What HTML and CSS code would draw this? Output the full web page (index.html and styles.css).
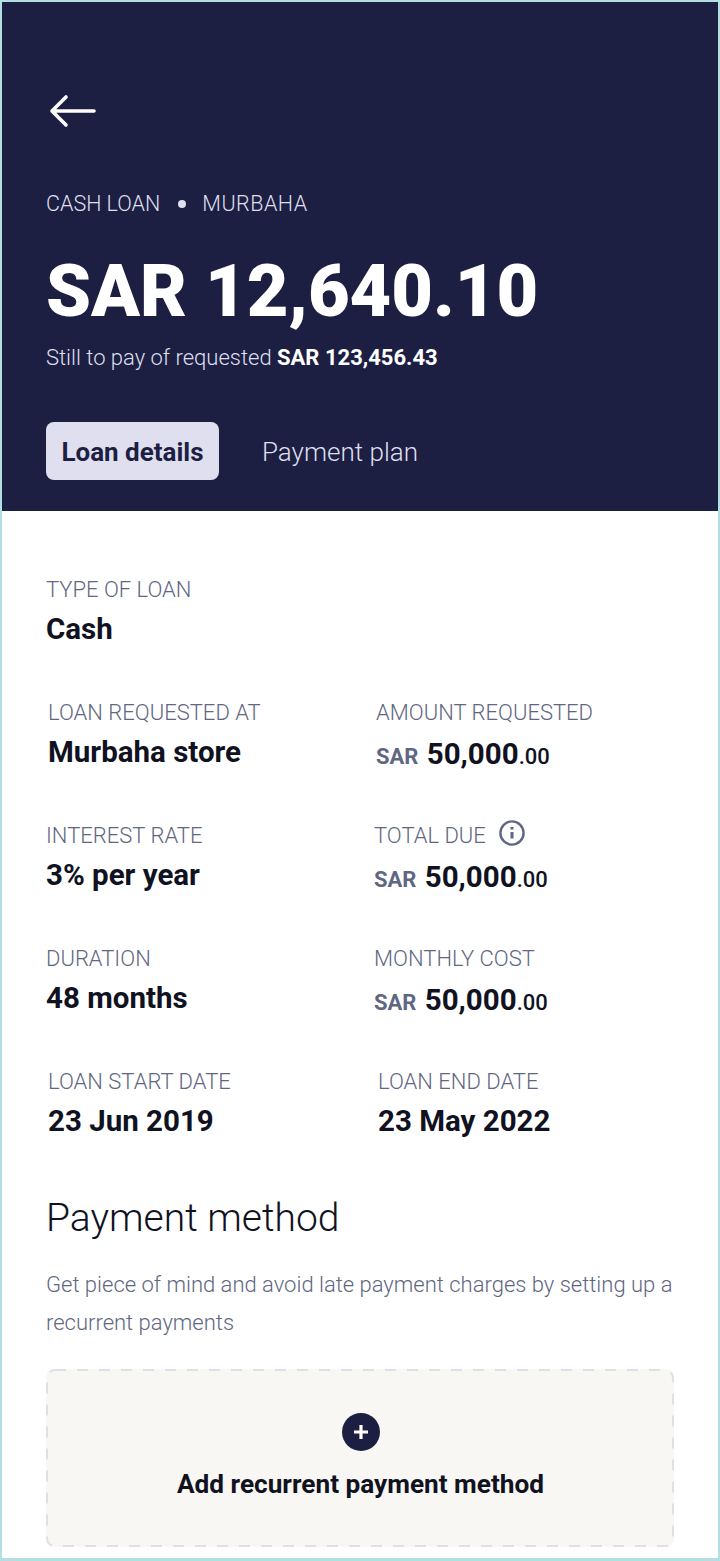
FILE: index.html
```html
<!DOCTYPE html>
<html lang="en">
<head>
    <meta charset="UTF-8">
    <meta name="viewport" content="width=device-width, initial-scale=1.0">
    <title>Loan details</title>
    <link rel="stylesheet" href="styles.css">
</head>

<body>
    <header class="hero">
        <svg class="back" width="48" height="34" viewBox="0 0 48 34" fill="none" stroke="#fff" stroke-width="3.600" stroke-linecap="round" stroke-linejoin="round">
            <path d="M46 17H4M18 3 4 17l14 14"/>
        </svg>
        <div class="crumbs"><span>CASH LOAN</span><i class="dot"></i><span>MURBAHA</span></div>
        <h1 class="balance">SAR 12,640.10</h1>
        <p class="still">Still to pay of requested <b>SAR 123,456.43</b></p>
        <nav class="tabs">
            <a class="tab active">Loan details</a>
            <a class="tab">Payment plan</a>
        </nav>
    </header>

    <main class="content">
        <div class="row row-a">
            <div class="item">
                <div class="label">TYPE OF LOAN</div>
                <div class="value">Cash</div>
            </div>
        </div>
        <div class="row row-b">
            <div class="item">
                <div class="label">LOAN REQUESTED AT</div>
                <div class="value">Murbaha store</div>
            </div>
            <div class="item">
                <div class="label">AMOUNT REQUESTED</div>
                <div class="value money"><span class="cur">SAR</span> 50,000<span class="dec">.00</span></div>
            </div>
        </div>
        <div class="row row-a">
            <div class="item">
                <div class="label">INTEREST RATE</div>
                <div class="value">3% per year</div>
            </div>
            <div class="item">
                <div class="label">TOTAL DUE
                    <svg class="info" width="28" height="28" viewBox="0 0 28 28" fill="none" stroke="#5f6782" stroke-width="2.400">
                        <circle cx="14" cy="14" r="11.600"/>
                        <path d="M14 13v6.500" stroke-width="3"/>
                        <path d="M14 8v2.500" stroke-width="3"/>
                    </svg>
                </div>
                <div class="value money"><span class="cur">SAR</span> 50,000<span class="dec">.00</span></div>
            </div>
        </div>
        <div class="row row-a">
            <div class="item">
                <div class="label">DURATION</div>
                <div class="value">48 months</div>
            </div>
            <div class="item">
                <div class="label">MONTHLY COST</div>
                <div class="value money"><span class="cur">SAR</span> 50,000<span class="dec">.00</span></div>
            </div>
        </div>
        <div class="row row-c">
            <div class="item">
                <div class="label">LOAN START DATE</div>
                <div class="value">23 Jun 2019</div>
            </div>
            <div class="item">
                <div class="label">LOAN END DATE</div>
                <div class="value">23 May 2022</div>
            </div>
        </div>

        <h2 class="section-title">Payment method</h2>
        <p class="section-text">Get piece of mind and avoid late payment charges by setting up a recurrent payments</p>

        <div class="add-box">
            <svg class="dashes" width="100%" height="100%" fill="none">
                <rect x="1" y="1" width="626" height="176" rx="8" stroke="#dfdfea" stroke-width="2" stroke-dasharray="11 11"/>
            </svg>
            <span class="plus">
                <svg width="16" height="16" viewBox="0 0 16 16" fill="none" stroke="#fff" stroke-width="3.200">
                    <path d="M8 1v14M1 8h14"/>
                </svg>
            </span>
            <div class="add-label">Add recurrent payment method</div>
        </div>
    </main>
</body>
</html>
```

FILE: styles.css
```css
* {
    box-sizing: border-box;
}

html, body {
    height: 100%;
}

body {
    margin: 0;
    height: 1561px;
    overflow: hidden;
    border: 2px solid #b1e0e3;
    border-bottom-width: 3px;
    background-color: #fff;
    font-family: Roboto, "Noto Sans", sans-serif;
    color: #10121f;
}

.hero {
    height: 509px;
    padding: 92px 44px 0;
    background-color: #1c1f42;
    color: #fff;
}

.back {
    display: block;
    margin-left: 2px;
}

.crumbs {
    display: flex;
    align-items: center;
    margin-top: 61px;
    font-size: 21.500px;
    line-height: 30px;
    font-weight: 300;
    color: #dfdfef;
}

.crumbs span:last-child {
    letter-spacing: 0.500px;
}

.dot {
    width: 8px;
    height: 8px;
    margin: 0 16px 0 18px;
    border-radius: 50%;
    background-color: #dfdfef;
}

.balance {
    margin: 32px 0 0;
    font-size: 72px;
    line-height: 82px;
    font-weight: 900;
}

.still {
    margin: 10px 0 0;
    font-size: 22px;
    line-height: 30px;
    font-weight: 300;
    color: #dfdfef;
}

.still b {
    font-weight: 700;
    color: #fff;
}

.tabs {
    display: flex;
    align-items: center;
    margin-top: 49px;
}

.tab {
    height: 58px;
    line-height: 60px;
    font-size: 26px;
    font-weight: 300;
    color: #dfdfef;
}

.tab.active {
    width: 173px;
    margin-right: 43px;
    text-align: center;
    border-radius: 8px;
    background-color: #dfdfef;
    color: #1c1f42;
    font-weight: 700;
}

.content {
    padding: 62px 44px 0;
}

.row {
    display: grid;
    grid-template-columns: 328px 1fr;
    height: 123px;
}

.row-b {
    padding-left: 2px;
}

.row-c {
    padding-left: 2px;
    grid-template-columns: 330px 1fr;
}

.label {
    display: flex;
    align-items: center;
    height: 32px;
    font-size: 22px;
    font-weight: 300;
    color: #5f6782;
}

.info {
    margin: -4px 0 0 12px;
}

.value {
    height: 48px;
    line-height: 48px;
    font-size: 29.500px;
    font-weight: 700;
}

.money {
    padding-top: 2px;
}

.cur {
    margin-right: 1px;
    font-size: 22px;
    color: #5f6782;
}

.dec {
    font-size: 22px;
    font-weight: 500;
}

.section-title {
    margin: 5px 0 0;
    font-size: 39px;
    line-height: 50px;
    font-weight: 300;
}

.section-text {
    margin: 23px 0 0;
    font-size: 22px;
    line-height: 38px;
    font-weight: 300;
    color: #5f6782;
}

.add-box {
    position: relative;
    display: flex;
    flex-direction: column;
    align-items: center;
    width: 628px;
    height: 178px;
    margin-top: 27px;
    padding-top: 44px;
    border-radius: 8px;
    background-color: #f8f7f3;
}

.dashes {
    position: absolute;
    top: 0;
    left: 0;
}

.plus {
    display: flex;
    align-items: center;
    justify-content: center;
    width: 38px;
    height: 38px;
    margin-left: 1px;
    border-radius: 50%;
    background-color: #1c1f42;
}

.add-label {
    margin-top: 15px;
    margin-left: 1px;
    font-size: 26.200px;
    line-height: 36px;
    font-weight: 700;
}
```
